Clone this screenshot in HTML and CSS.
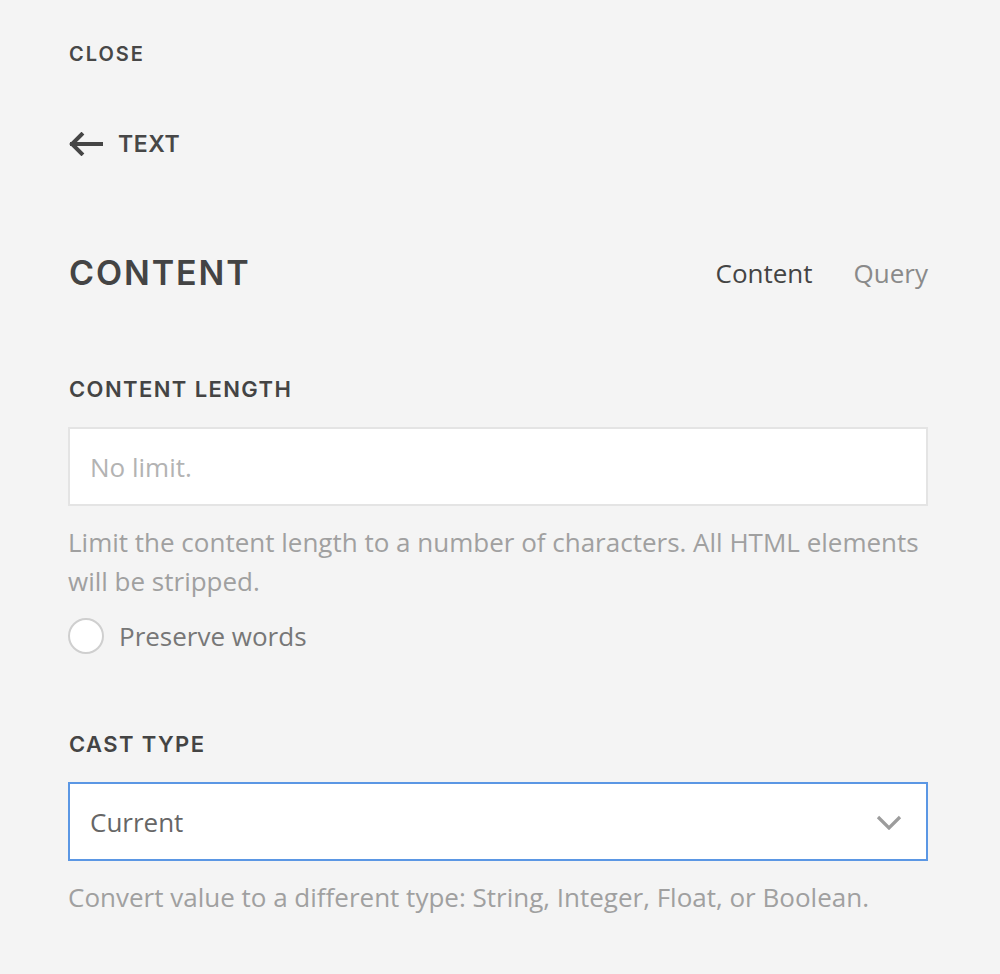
FILE: index.html
```html
<!DOCTYPE html>
<html lang="en">
<head>
<meta charset="utf-8">
<title>Text content</title>
<link rel="stylesheet" href="styles.css">
</head>
<body>
<div class="panel">
  <div class="close">CLOSE</div>
  <div class="back">
    <svg class="back-icon" width="34" height="24" viewBox="0 0 34 24" aria-hidden="true">
      <path d="M32 12H3M12.5 2.5L3 12l9.5 9.5" fill="none" stroke="#454545" stroke-width="4" stroke-linecap="square" stroke-linejoin="miter"/>
    </svg>
    <span class="back-label">TEXT</span>
  </div>

  <div class="header">
    <h1 class="title">CONTENT</h1>
    <nav class="tabs">
      <span class="tab active">Content</span>
      <span class="tab">Query</span>
    </nav>
  </div>

  <section class="field first">
    <div class="label">CONTENT LENGTH</div>
    <div class="input"><span class="placeholder">No limit.</span></div>
    <p class="help">Limit the content length to a number of characters. All HTML elements will be stripped.</p>
    <div class="check">
      <span class="radio"></span>
      <span class="check-label">Preserve words</span>
    </div>
  </section>

  <section class="field second">
    <div class="label">CAST TYPE</div>
    <div class="select">
      <span class="value">Current</span>
      <svg class="chevron" width="26" height="16" viewBox="0 0 26 16" aria-hidden="true">
        <path d="M2 3l11 11L24 3" fill="none" stroke="#9c9c9c" stroke-width="3.2"/>
      </svg>
    </div>
    <p class="help">Convert value to a different type: String, Integer, Float, or Boolean.</p>
  </section>
</div>
</body>
</html>
```

FILE: styles.css
```css
html, body {
  margin: 0;
  padding: 0;
  background: #f4f4f4;
}

body {
  font-family: "Open Sans", "Liberation Sans", sans-serif;
  color: #444;
}

.panel {
  width: 860px;
  padding: 42px 0 40px 68px;
}

.close {
  font-family: Inter, "DejaVu Sans", sans-serif;
  font-weight: 600;
  font-size: 20px;
  line-height: 24px;
  letter-spacing: 2px;
  color: #474747;
  padding-left: 1px;
}

.back {
  display: flex;
  align-items: center;
  gap: 15px;
  margin-top: 66px;
  height: 24px;
  padding-left: 1px;
}

.back-icon {
  display: block;
}

.back-label {
  font-family: Inter, "DejaVu Sans", sans-serif;
  font-weight: 600;
  font-size: 23px;
  line-height: 24px;
  letter-spacing: 0.6px;
  color: #474747;
}

.header {
  display: flex;
  align-items: center;
  justify-content: space-between;
  margin-top: 95px;
  height: 44px;
}

.title {
  margin: 0;
  padding-left: 1px;
  font-family: Inter, "DejaVu Sans", sans-serif;
  font-weight: 600;
  font-size: 34px;
  line-height: 44px;
  letter-spacing: 1.9px;
  color: #444;
}

.tabs {
  display: flex;
  gap: 41px;
  font-size: 26px;
  line-height: 36px;
}

.tab {
  color: #8a8a8a;
}

.tab.active {
  color: #444;
}

.field.first {
  margin-top: 82px;
}

.field.second {
  margin-top: 78px;
}

.label {
  padding-left: 1px;
  font-family: Inter, "DejaVu Sans", sans-serif;
  font-weight: 600;
  font-size: 22px;
  line-height: 24px;
  letter-spacing: 1.4px;
  color: #444;
}

.input,
.select {
  box-sizing: border-box;
  height: 79px;
  margin-top: 26px;
  background: #fff;
  display: flex;
  align-items: center;
  padding: 0 24px 0 20px;
  font-size: 26px;
}

.input {
  border: 2px solid #e4e4e4;
}

.placeholder {
  color: #b3b3b3;
}

.select {
  border: 2px solid #5b97e4;
  justify-content: space-between;
}

.value {
  color: #666;
}

.chevron {
  display: block;
}

.help {
  margin: 17px 0 0;
  font-size: 26px;
  line-height: 39px;
  color: #a0a0a0;
}

.check {
  display: flex;
  align-items: center;
  gap: 15px;
  margin-top: 17px;
}

.radio {
  box-sizing: border-box;
  width: 36px;
  height: 36px;
  border-radius: 50%;
  background: #fff;
  border: 2px solid #cfcfcf;
}

.check-label {
  font-size: 26px;
  line-height: 36px;
  color: #777;
}
```
